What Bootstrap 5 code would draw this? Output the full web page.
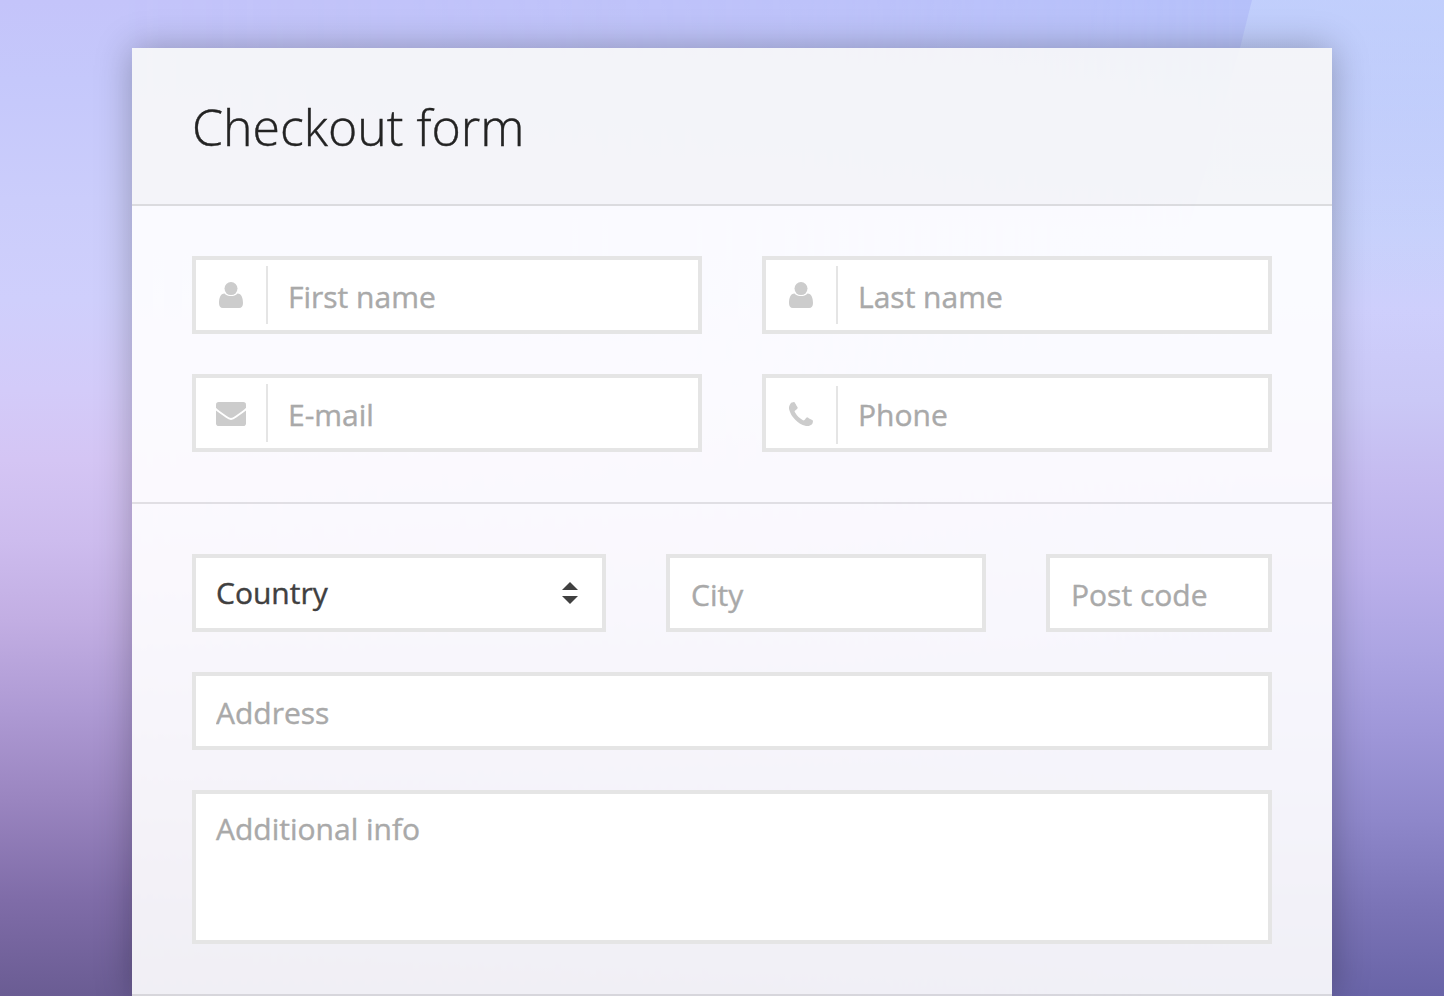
<!DOCTYPE html>
<html lang="en">
<head>
<meta charset="utf-8">
<meta name="viewport" content="width=device-width, initial-scale=1">
<title>Checkout form</title>
<link rel="stylesheet" href="https://cdn.jsdelivr.net/npm/bootstrap@5.3.0/dist/css/bootstrap.min.css">
<style>
body { height: 996px; font-family: "Open Sans", sans-serif; font-size: 30px; color: #404040; background: #c4c4fa; -webkit-text-stroke: .4px; }
.backdrop { inset: 0; z-index: -1; background: linear-gradient(180deg, #c4c4fa 0, #c5c8fb 80px, #cbcdfb 200px, #cfcffc 300px, #d3cbf9 390px, #d4c5f4 460px, #cdbcee 540px, #c2aee3 620px, #ae9ad4 710px, #9a85c0 800px, #7f6ca8 900px, #6a5c93 996px); }
.backdrop::before { content: ""; position: absolute; inset: 0; background: linear-gradient(180deg, #b5c0fa 0, #bbc6fa 100px, #c6cffb 230px, #cecefc 310px, #cac8f6 400px, #c5bbf0 480px, #bbb0eb 570px, #ada5e3 650px, #9f97d9 730px, #8e87ca 820px, #7a73b6 910px, #6964a7 996px); -webkit-mask-image: linear-gradient(90deg, transparent 120px, rgba(0,0,0,.45) 800px, #000 1240px); mask-image: linear-gradient(90deg, transparent 120px, rgba(0,0,0,.45) 800px, #000 1240px); }
.backdrop::after { content: ""; position: absolute; inset: 0; clip-path: polygon(1252px 0, 1444px 0, 1444px 996px, 945px 996px, 1105px 510px, 1197px 200px, 1240px 48px); background: linear-gradient(180deg, rgba(204,220,254,.52), rgba(204,218,254,.3) 150px, rgba(204,220,254,0) 360px); }
.panel { width: 1200px; height: 948px; margin: 0 0 0 132px; box-shadow: 0 0 34px rgba(0,0,0,.28); }
.panel-head { height: 158px; padding: 45px 60px 0; background: rgba(248,248,248,.9); border-bottom: 2px solid rgba(0,0,0,.1); }
.panel-head h1 { font-size: 50px; font-weight: 300; line-height: 68px; color: #232323; }
.section-block { padding: 50px 60px; gap: 40px; background: rgba(255,255,255,.9); border-bottom: 2px solid rgba(0,0,0,.1); }
.two-up { gap: 40px 60px; grid-template-columns: 510px 510px; }
.place-row { gap: 60px; grid-template-columns: 414px 320px 226px; }
.field-box { height: 78px; border: 4px solid #e5e5e5; background: #fff; }
.field-box .form-control { height: 70px; padding: 2px 0 0 20px; border: 0; background: transparent; font-size: 30px; line-height: 40px; color: #404040; box-shadow: none; }
.place-row .form-control { padding-left: 21px; }
.form-control::placeholder { color: #a9a9a9 !important; opacity: 1; }
.field-icon { width: 72px; height: 58px; margin-top: 6px; flex: none; border-right: 2px solid #e5e5e5; color: #ccc; }
.field-icon.lower { margin-top: 8px; }
.field-box .form-select { height: 70px; padding: 0 20px; border: 0; background: none; font-size: 30px; line-height: 40px; color: #404040; }
.field-box.tall { height: 154px; }
.field-box.tall .form-control { height: 146px; padding: 15px 20px; resize: none; }
.arrows { right: 24px; top: 24px; pointer-events: none; }
</style>
</head>
<body class="overflow-hidden pt-5">
<div class="backdrop position-absolute"></div>
<form class="panel">
  <header class="panel-head"><h1 class="m-0">Checkout form</h1></header>
  <section class="section-block d-grid two-up">
    <label class="field-box d-flex">
      <span class="field-icon"><svg class="d-block" width="70" height="58" fill="currentColor"><circle cx="35" cy="22.600" r="6.500"/><path d="M28.500 27.400C30.200 29.300 32.400 30.100 35 30.100S39.800 29.300 41.500 27.400C45.600 27.400 47 32 47 37.200C47 40.300 45.500 42 43.200 42H26.800C24.500 42 23 40.300 23 37.200C23 32 24.400 27.400 28.500 27.400Z"/></svg></span>
      <input class="form-control" type="text" placeholder="First name">
    </label>
    <label class="field-box d-flex">
      <span class="field-icon"><svg class="d-block" width="70" height="58" fill="currentColor"><circle cx="35" cy="22.600" r="6.500"/><path d="M28.500 27.400C30.200 29.300 32.400 30.100 35 30.100S39.800 29.300 41.500 27.400C45.600 27.400 47 32 47 37.200C47 40.300 45.500 42 43.200 42H26.800C24.500 42 23 40.300 23 37.200C23 32 24.400 27.400 28.500 27.400Z"/></svg></span>
      <input class="form-control" type="text" placeholder="Last name">
    </label>
    <label class="field-box d-flex">
      <span class="field-icon"><svg class="d-block" width="70" height="58"><rect x="20" y="18" width="30" height="24" rx="2.800" fill="currentColor"/><path d="M19 24.200C20.500 26 22 27 23.500 28L30.200 32.800C32 34.200 33.500 35 35 35S38 34.200 39.800 32.800L46.500 28C48 27 49.500 26 51 24.200" fill="none" stroke="#fff" stroke-width="1.800"/></svg></span>
      <input class="form-control" type="email" placeholder="E-mail">
    </label>
    <label class="field-box d-flex">
      <span class="field-icon lower"><svg class="d-block" width="70" height="58" fill="currentColor"><path transform="translate(19.700 13.900) scale(.01705)" d="M1600 1240q0 27-10 70.500t-21 68.500q-21 50-122 106-94 51-186 51-27 0-53-3.500t-57.500-12.500-47-14.500-55.500-20.500-49-18q-98-35-175-83-127-79-264-216t-216-264q-48-77-83-175-3-9-18-49t-20.500-55.500-14.500-47-12.500-57.500-3.500-53q0-92 51-186 56-101 106-122 25-11 68.500-21t70.500-10q14 0 21 3 18 6 53 76 11 19 30 54t35 63.500 31 53.500q3 4 17.500 25t21.500 35.500 7 28.500q0 20-28.500 50t-62 55-62 53-28.500 46q0 9 5 22.500t8.500 20.500 14 24 11.500 19q76 137 174 235t235 174q2 1 19 11.500t24 14 20.500 8.500 22.500 5q18 0 46-28.500t53-62 55-62 50-28.500q14 0 28.500 7t35.500 21.500 25 17.500q25 15 53.500 31t63.500 35 54 30q70 35 76 53 3 7 3 21z"/></svg></span>
      <input class="form-control" type="tel" placeholder="Phone">
    </label>
  </section>
  <section class="section-block d-flex flex-column">
    <div class="d-grid place-row">
      <div class="field-box position-relative">
        <select class="form-select" aria-label="Country"><option>Country</option></select>
        <svg class="arrows position-absolute" width="16" height="22" fill="#404040"><path d="M0 8L8 0L16 8ZM0 14H16L8 22Z"/></svg>
      </div>
      <div class="field-box"><input class="form-control" type="text" placeholder="City"></div>
      <div class="field-box"><input class="form-control" type="text" placeholder="Post code"></div>
    </div>
    <div class="field-box"><input class="form-control" type="text" placeholder="Address"></div>
    <div class="field-box tall"><textarea class="form-control" placeholder="Additional info"></textarea></div>
  </section>
</form>
<script src="https://cdn.jsdelivr.net/npm/bootstrap@5.3.0/dist/js/bootstrap.bundle.min.js"></script>
</body>
</html>
